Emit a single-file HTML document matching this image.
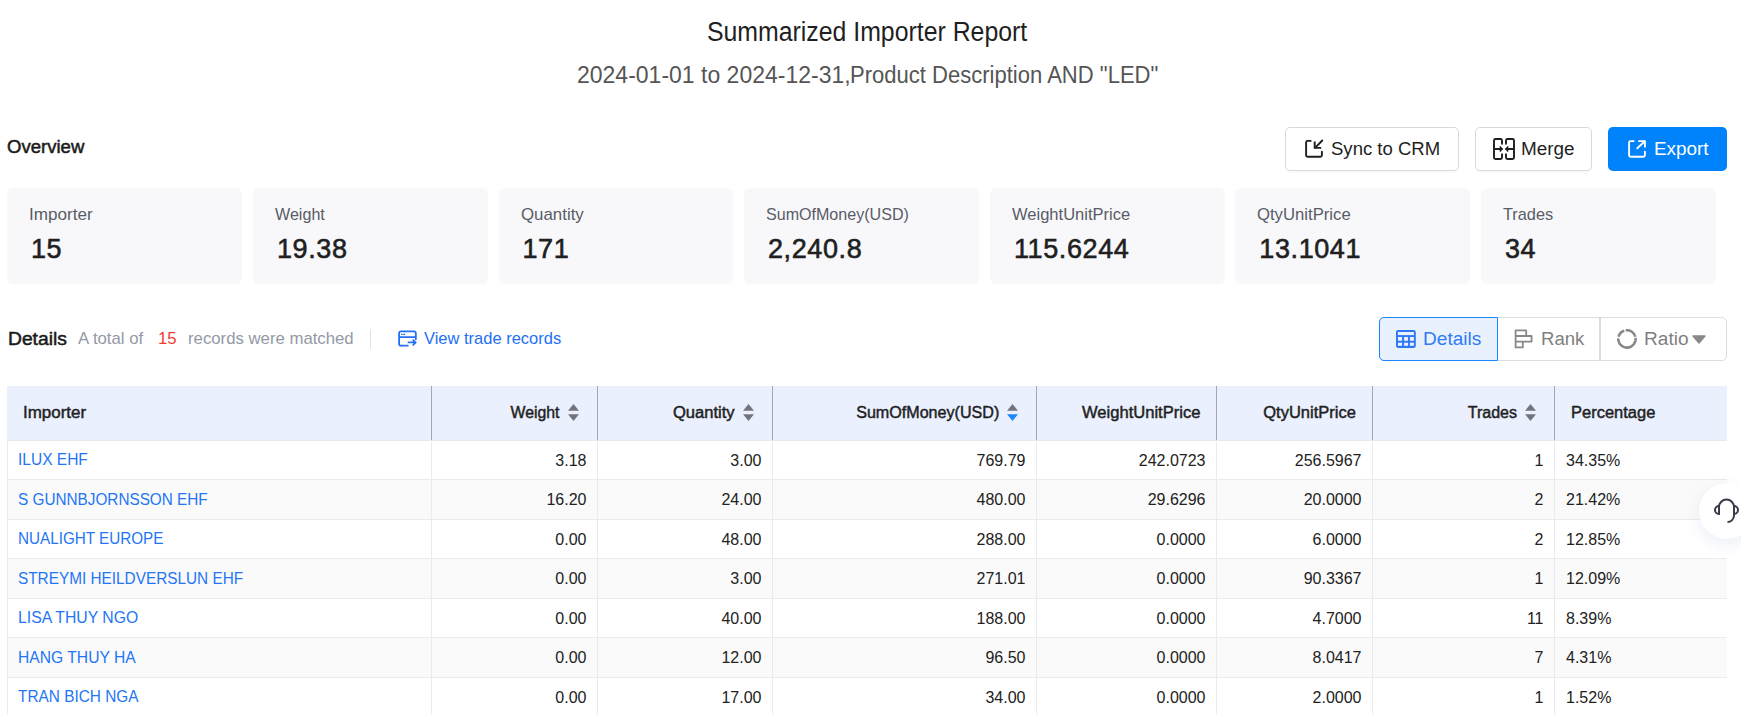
<!DOCTYPE html>
<html><head><meta charset="utf-8"><style>
*{box-sizing:border-box;margin:0;padding:0}
html,body{width:1741px;height:715px;overflow:hidden;background:#fff;font-family:"Liberation Sans",sans-serif;color:#222}
body{position:relative}
.a{position:absolute;white-space:nowrap;line-height:1}
.sx{display:inline-block;transform-origin:0 50%}
.sxr{display:inline-block;transform-origin:100% 50%}
.sxc{display:inline-block;transform-origin:50% 50%}
</style></head><body>
<div class="a" style="left:7px;width:1720px;top:19px;text-align:center;font-size:27px;color:#1f1f1f"><span class="sxc" style="transform:scaleX(0.92)">Summarized Importer Report</span></div>
<div class="a" style="left:577px;top:64px;font-size:23px;color:#555;transform:scaleX(1.0);transform-origin:0 50%">2024-01-01 to 2024-12-31,</div>
<div class="a" style="left:849.5px;top:64px;font-size:23px;color:#555;transform:scaleX(0.958);transform-origin:0 50%">Product Description AND "LED"</div>
<div class="a" style="left:7px;top:138px;font-size:18px;color:#1a1a1a;-webkit-text-stroke:0.5px #1a1a1a;transform:scaleX(1.03);transform-origin:0 50%;">Overview</div>
<div class="a" style="left:1285px;top:127px;width:174px;height:44px;border:1px solid #d9d9dd;border-radius:5px;background:#fff;box-shadow:0 2px 0 rgba(0,0,0,.02);"></div>
<div class="a" style="left:1475px;top:127px;width:117px;height:44px;border:1px solid #d9d9dd;border-radius:5px;background:#fff;box-shadow:0 2px 0 rgba(0,0,0,.02);"></div>
<div class="a" style="left:1608px;top:127px;width:119px;height:44px;border-radius:5px;background:#0082fb"></div>
<svg class="a" style="left:1304px;top:139px" width="21" height="21" viewBox="0 0 21 21"><path d="M6.7 1.9H3.6A1.5 1.5 0 0 0 2.1 3.4V16.2A1.5 1.5 0 0 0 3.6 17.7H16.4A1.5 1.5 0 0 0 17.9 16.2V12.7" fill="none" stroke="#1f1f1f" stroke-width="1.9" stroke-linecap="round"/><path d="M18.3 1.5L11.2 8.6" fill="none" stroke="#1f1f1f" stroke-width="1.9" stroke-linecap="round"/><path d="M10.7 2.6V8.9H17.2" fill="none" stroke="#1f1f1f" stroke-width="1.9"/></svg>
<div class="a" style="left:1331px;top:140px;font-size:18px;color:#1f1f1f;transform:scaleX(1.03);transform-origin:0 50%;">Sync to CRM</div>
<svg class="a" style="left:1492px;top:137px" width="24" height="24" viewBox="0 0 24 24"><g fill="none" stroke="#1f1f1f" stroke-width="1.9" stroke-linecap="round"><path d="M10 6.7V3.5A1.5 1.5 0 0 0 8.5 2H3.5A1.5 1.5 0 0 0 2 3.5V20.5A1.5 1.5 0 0 0 3.5 22H8.5A1.5 1.5 0 0 0 10 20.5V17.2"/><path d="M14 6.7V3.5A1.5 1.5 0 0 1 15.5 2H20.5A1.5 1.5 0 0 1 22 3.5V20.5A1.5 1.5 0 0 1 20.5 22H15.5A1.5 1.5 0 0 1 14 20.5V17.2"/><path d="M2 12H8.5M22 12H15.5"/></g><path d="M8 9.2L11 12L8 14.8Z M16 9.2L13 12L16 14.8Z" fill="#1f1f1f" stroke="#1f1f1f" stroke-width=".6" stroke-linejoin="round"/></svg>
<div class="a" style="left:1521px;top:140px;font-size:18px;color:#1f1f1f;transform:scaleX(1.05);transform-origin:0 50%;">Merge</div>
<svg class="a" style="left:1627px;top:139px" width="21" height="21" viewBox="0 0 21 21"><path d="M6.7 2.1H3.6A1.5 1.5 0 0 0 2.1 3.6V16.2A1.5 1.5 0 0 0 3.6 17.7H16.4A1.5 1.5 0 0 0 17.9 16.2V12.7" fill="none" stroke="#fff" stroke-width="1.9" stroke-linecap="round"/><path d="M10.3 9.3L17.4 2.6" fill="none" stroke="#fff" stroke-width="1.9" stroke-linecap="round"/><path d="M11.2 2.1H17.9V8.5" fill="none" stroke="#fff" stroke-width="1.9"/></svg>
<div class="a" style="left:1654px;top:140px;font-size:18px;color:#fff;transform:scaleX(1.05);transform-origin:0 50%;">Export</div>
<div class="a" style="left:7px;top:188px;width:234.5px;height:96px;background:#f8f8fb;border-radius:6px"></div>
<div class="a" style="left:29px;top:206px;font-size:17px;color:#595c66;transform:scaleX(1.006);transform-origin:0 50%;">Importer</div>
<div class="a" style="left:31px;top:236px;font-size:27px;color:#1f1f1f;transform:scaleX(1.0);transform-origin:0 50%;letter-spacing:0.6px;-webkit-text-stroke:0.6px #1f1f1f">15</div>
<div class="a" style="left:253px;top:188px;width:234.5px;height:96px;background:#f8f8fb;border-radius:6px"></div>
<div class="a" style="left:275px;top:206px;font-size:17px;color:#595c66;transform:scaleX(0.947);transform-origin:0 50%;">Weight</div>
<div class="a" style="left:277px;top:236px;font-size:27px;color:#1f1f1f;transform:scaleX(1.0);transform-origin:0 50%;letter-spacing:0.6px;-webkit-text-stroke:0.6px #1f1f1f">19.38</div>
<div class="a" style="left:498.5px;top:188px;width:234.5px;height:96px;background:#f8f8fb;border-radius:6px"></div>
<div class="a" style="left:520.5px;top:206px;font-size:17px;color:#595c66;transform:scaleX(0.991);transform-origin:0 50%;">Quantity</div>
<div class="a" style="left:522.5px;top:236px;font-size:27px;color:#1f1f1f;transform:scaleX(1.0);transform-origin:0 50%;letter-spacing:0.6px;-webkit-text-stroke:0.6px #1f1f1f">171</div>
<div class="a" style="left:744px;top:188px;width:234.5px;height:96px;background:#f8f8fb;border-radius:6px"></div>
<div class="a" style="left:766px;top:206px;font-size:17px;color:#595c66;transform:scaleX(0.945);transform-origin:0 50%;">SumOfMoney(USD)</div>
<div class="a" style="left:768px;top:236px;font-size:27px;color:#1f1f1f;transform:scaleX(1.0);transform-origin:0 50%;letter-spacing:0.6px;-webkit-text-stroke:0.6px #1f1f1f">2,240.8</div>
<div class="a" style="left:990px;top:188px;width:234.5px;height:96px;background:#f8f8fb;border-radius:6px"></div>
<div class="a" style="left:1012px;top:206px;font-size:17px;color:#595c66;transform:scaleX(0.972);transform-origin:0 50%;">WeightUnitPrice</div>
<div class="a" style="left:1014px;top:236px;font-size:27px;color:#1f1f1f;transform:scaleX(1.0);transform-origin:0 50%;letter-spacing:0.6px;-webkit-text-stroke:0.6px #1f1f1f">115.6244</div>
<div class="a" style="left:1235.3px;top:188px;width:234.5px;height:96px;background:#f8f8fb;border-radius:6px"></div>
<div class="a" style="left:1257.3px;top:206px;font-size:17px;color:#595c66;transform:scaleX(0.982);transform-origin:0 50%;">QtyUnitPrice</div>
<div class="a" style="left:1259.3px;top:236px;font-size:27px;color:#1f1f1f;transform:scaleX(1.0);transform-origin:0 50%;letter-spacing:0.6px;-webkit-text-stroke:0.6px #1f1f1f">13.1041</div>
<div class="a" style="left:1481px;top:188px;width:234.5px;height:96px;background:#f8f8fb;border-radius:6px"></div>
<div class="a" style="left:1503px;top:206px;font-size:17px;color:#595c66;transform:scaleX(0.96);transform-origin:0 50%;">Trades</div>
<div class="a" style="left:1505px;top:236px;font-size:27px;color:#1f1f1f;transform:scaleX(1.0);transform-origin:0 50%;letter-spacing:0.6px;-webkit-text-stroke:0.6px #1f1f1f">34</div>
<div class="a" style="left:8px;top:329.5px;font-size:18px;color:#1a1a1a;-webkit-text-stroke:0.5px #1a1a1a;transform:scaleX(1.07);transform-origin:0 50%;">Details</div>
<div class="a" style="left:78px;top:329.5px;font-size:17px;color:#9499a6;transform:scaleX(0.985);transform-origin:0 50%;">A total of</div>
<div class="a" style="left:158px;top:329.5px;font-size:17px;color:#f13c30;transform:scaleX(0.985);transform-origin:0 50%;">15</div>
<div class="a" style="left:188px;top:329.5px;font-size:17px;color:#9499a6;transform:scaleX(0.985);transform-origin:0 50%;">records were matched</div>
<div class="a" style="left:370px;top:329px;width:1px;height:20px;background:#e1e2e6"></div>
<svg class="a" style="left:398px;top:330px" width="20" height="17" viewBox="0 0 20 17"><g fill="none" stroke="#2370f4" stroke-width="1.8" stroke-linecap="round"><path d="M17.8 9.3V3.2A1.9 1.9 0 0 0 15.9 1.3H3A1.9 1.9 0 0 0 1.1 3.2V13.7A1.9 1.9 0 0 0 3 15.6H9.9"/><path d="M1.5 7.1H17.5"/><path d="M10.5 12.4H17.5M15.2 10.1L17.6 12.4L15.2 14.8"/></g><g fill="#2370f4"><circle cx="3.6" cy="4.4" r=".7"/><circle cx="5" cy="4.4" r=".7"/><circle cx="6.4" cy="4.4" r=".8"/></g></svg>
<div class="a" style="left:424px;top:329.5px;font-size:17px;color:#2370f4;transform:scaleX(0.97);transform-origin:0 50%;">View trade records</div>
<div class="a" style="left:1379px;top:317px;width:348px;height:44px;border:1px solid #dcdde2;border-radius:5px;background:#fff"></div>
<div class="a" style="left:1379px;top:317px;width:119px;height:44px;border:1px solid #1a86ff;border-radius:5px 0 0 5px;background:#eaf1fe"></div>
<div class="a" style="left:1599px;top:318px;width:2px;height:42px;background:#dcdde2"></div>
<svg class="a" style="left:1396px;top:330px" width="20" height="18" viewBox="0 0 20 18"><rect x="0" y="0" width="19.8" height="18" rx="2.2" fill="#2c78f6"/><g fill="#eaf1fe"><rect x="1.9" y="2" width="16" height="3.1"/><rect x="1.9" y="7" width="4.2" height="3.8"/><rect x="8.1" y="7" width="3.9" height="3.8"/><rect x="13.9" y="7" width="4" height="3.8"/><rect x="1.9" y="12.7" width="4.2" height="3.1"/><rect x="8.1" y="12.7" width="3.9" height="3.1"/><rect x="13.9" y="12.7" width="4" height="3.1"/></g></svg>
<div class="a" style="left:1423px;top:329.5px;font-size:18px;color:#2f7bf5;transform:scaleX(1.06);transform-origin:0 50%;">Details</div>
<svg class="a" style="left:1514px;top:329px" width="20" height="20" viewBox="0 0 20 20"><path d="M1.6 1.4H12.2V7H17.6V12.6H8.8V18.4H1.6Z M1.6 7H12.2 M1.6 12.6H8.8" fill="none" stroke="#888" stroke-width="1.8" stroke-linejoin="round"/></svg>
<div class="a" style="left:1541px;top:329.5px;font-size:18px;color:#7f7f7f;transform:scaleX(1.03);transform-origin:0 50%;">Rank</div>
<svg class="a" style="left:1617px;top:329px" width="20" height="20" viewBox="0 0 20 20"><circle cx="9.95" cy="9.95" r="8.7" fill="none" stroke="#888" stroke-width="2.6" stroke-dasharray="28.85 1.52 8.65 1.52 12.6 1.52" transform="rotate(-7 9.95 9.95)"/></svg>
<div class="a" style="left:1644px;top:329.5px;font-size:18px;color:#7f7f7f;transform:scaleX(1.06);transform-origin:0 50%;">Ratio</div>
<svg class="a" style="left:1692px;top:334.5px" width="14" height="9" viewBox="0 0 14 9"><path d="M1 1h12L7 8z" fill="#888" stroke="#888" stroke-width="1.4" stroke-linejoin="round"/></svg>
<div class="a" style="left:7px;top:386px;width:1720px;height:54px;background:#eaf0fd"></div>
<div class="a" style="left:7px;top:440.0px;width:1720px;height:39.5px;background:#fff"></div>
<div class="a" style="left:7px;top:479.5px;width:1720px;height:39.5px;background:#fafafa"></div>
<div class="a" style="left:7px;top:479.0px;width:1720px;height:1px;background:#ebebee"></div>
<div class="a" style="left:7px;top:519.0px;width:1720px;height:39.5px;background:#fff"></div>
<div class="a" style="left:7px;top:518.5px;width:1720px;height:1px;background:#ebebee"></div>
<div class="a" style="left:7px;top:558.5px;width:1720px;height:39.5px;background:#fafafa"></div>
<div class="a" style="left:7px;top:558.0px;width:1720px;height:1px;background:#ebebee"></div>
<div class="a" style="left:7px;top:598.0px;width:1720px;height:39.5px;background:#fff"></div>
<div class="a" style="left:7px;top:597.5px;width:1720px;height:1px;background:#ebebee"></div>
<div class="a" style="left:7px;top:637.5px;width:1720px;height:39.5px;background:#fafafa"></div>
<div class="a" style="left:7px;top:637.0px;width:1720px;height:1px;background:#ebebee"></div>
<div class="a" style="left:7px;top:677.0px;width:1720px;height:39.5px;background:#fff"></div>
<div class="a" style="left:7px;top:676.5px;width:1720px;height:1px;background:#ebebee"></div>
<div class="a" style="left:7px;top:439.5px;width:1720px;height:1px;background:#e9e9eb"></div>
<div class="a" style="left:7px;top:440px;width:1px;height:275px;background:#ebebee"></div>
<div class="a" style="left:431px;top:386px;width:1px;height:54px;background:#a3a7b3"></div>
<div class="a" style="left:431px;top:440px;width:1px;height:275px;background:#ebebee"></div>
<div class="a" style="left:597px;top:386px;width:1px;height:54px;background:#a3a7b3"></div>
<div class="a" style="left:597px;top:440px;width:1px;height:275px;background:#ebebee"></div>
<div class="a" style="left:772px;top:386px;width:1px;height:54px;background:#a3a7b3"></div>
<div class="a" style="left:772px;top:440px;width:1px;height:275px;background:#ebebee"></div>
<div class="a" style="left:1036px;top:386px;width:1px;height:54px;background:#a3a7b3"></div>
<div class="a" style="left:1036px;top:440px;width:1px;height:275px;background:#ebebee"></div>
<div class="a" style="left:1216px;top:386px;width:1px;height:54px;background:#a3a7b3"></div>
<div class="a" style="left:1216px;top:440px;width:1px;height:275px;background:#ebebee"></div>
<div class="a" style="left:1372px;top:386px;width:1px;height:54px;background:#a3a7b3"></div>
<div class="a" style="left:1372px;top:440px;width:1px;height:275px;background:#ebebee"></div>
<div class="a" style="left:1554px;top:386px;width:1px;height:54px;background:#a3a7b3"></div>
<div class="a" style="left:1554px;top:440px;width:1px;height:275px;background:#ebebee"></div>
<div class="a" style="left:23px;top:405px;font-size:16px;-webkit-text-stroke:0.45px #1f1f1f;color:#1f1f1f;transform:scaleX(1.06);transform-origin:0 50%">Importer</div>
<svg class="a" style="left:568px;top:404px" width="11" height="17" viewBox="0 0 11 17"><path d="M5.5 0L11 6.8H0z" fill="#74747c"/><path d="M5.5 17L11 10.2H0z" fill="#74747c"/></svg>
<div class="a" style="right:1181px;top:405px;font-size:16px;-webkit-text-stroke:0.45px #1f1f1f;color:#1f1f1f;transform:scaleX(0.99);transform-origin:100% 50%">Weight</div>
<svg class="a" style="left:743px;top:404px" width="11" height="17" viewBox="0 0 11 17"><path d="M5.5 0L11 6.8H0z" fill="#74747c"/><path d="M5.5 17L11 10.2H0z" fill="#74747c"/></svg>
<div class="a" style="right:1006px;top:405px;font-size:16px;-webkit-text-stroke:0.45px #1f1f1f;color:#1f1f1f;transform:scaleX(1.035);transform-origin:100% 50%">Quantity</div>
<svg class="a" style="left:1007px;top:404px" width="11" height="17" viewBox="0 0 11 17"><path d="M5.5 0L11 6.8H0z" fill="#74747c"/><path d="M5.5 17L11 10.2H0z" fill="#1a86ff"/></svg>
<div class="a" style="right:742px;top:405px;font-size:16px;-webkit-text-stroke:0.45px #1f1f1f;color:#1f1f1f;transform:scaleX(1.006);transform-origin:100% 50%">SumOfMoney(USD)</div>
<div class="a" style="right:541px;top:405px;font-size:16px;-webkit-text-stroke:0.45px #1f1f1f;color:#1f1f1f;transform:scaleX(1.035);transform-origin:100% 50%">WeightUnitPrice</div>
<div class="a" style="right:385px;top:405px;font-size:16px;-webkit-text-stroke:0.45px #1f1f1f;color:#1f1f1f;transform:scaleX(1.03);transform-origin:100% 50%">QtyUnitPrice</div>
<svg class="a" style="left:1525px;top:404px" width="11" height="17" viewBox="0 0 11 17"><path d="M5.5 0L11 6.8H0z" fill="#74747c"/><path d="M5.5 17L11 10.2H0z" fill="#74747c"/></svg>
<div class="a" style="right:224px;top:405px;font-size:16px;-webkit-text-stroke:0.45px #1f1f1f;color:#1f1f1f;transform:scaleX(1.0);transform-origin:100% 50%">Trades</div>
<div class="a" style="left:1571px;top:405px;font-size:16px;-webkit-text-stroke:0.45px #1f1f1f;color:#1f1f1f;transform:scaleX(1.03);transform-origin:0 50%">Percentage</div>
<div class="a" style="left:18px;top:452.0px;font-size:16px;color:#2375f6;transform:scaleX(0.97);transform-origin:0 50%">ILUX EHF</div>
<div class="a" style="right:1154.5px;top:452.6px;font-size:16px;color:#222;transform:scaleX(1.0);transform-origin:100% 50%">3.18</div>
<div class="a" style="right:979.5px;top:452.6px;font-size:16px;color:#222;transform:scaleX(1.0);transform-origin:100% 50%">3.00</div>
<div class="a" style="right:715.5px;top:452.6px;font-size:16px;color:#222;transform:scaleX(1.0);transform-origin:100% 50%">769.79</div>
<div class="a" style="right:535.5px;top:452.6px;font-size:16px;color:#222;transform:scaleX(1.0);transform-origin:100% 50%">242.0723</div>
<div class="a" style="right:379.5px;top:452.6px;font-size:16px;color:#222;transform:scaleX(1.0);transform-origin:100% 50%">256.5967</div>
<div class="a" style="right:197.5px;top:452.6px;font-size:16px;color:#222;transform:scaleX(1.0);transform-origin:100% 50%">1</div>
<div class="a" style="left:1566px;top:452.6px;font-size:16px;color:#222;transform:scaleX(1.0);transform-origin:0 50%">34.35%</div>
<div class="a" style="left:18px;top:491.5px;font-size:16px;color:#2375f6;transform:scaleX(0.957);transform-origin:0 50%">S GUNNBJORNSSON EHF</div>
<div class="a" style="right:1154.5px;top:492.1px;font-size:16px;color:#222;transform:scaleX(1.0);transform-origin:100% 50%">16.20</div>
<div class="a" style="right:979.5px;top:492.1px;font-size:16px;color:#222;transform:scaleX(1.0);transform-origin:100% 50%">24.00</div>
<div class="a" style="right:715.5px;top:492.1px;font-size:16px;color:#222;transform:scaleX(1.0);transform-origin:100% 50%">480.00</div>
<div class="a" style="right:535.5px;top:492.1px;font-size:16px;color:#222;transform:scaleX(1.0);transform-origin:100% 50%">29.6296</div>
<div class="a" style="right:379.5px;top:492.1px;font-size:16px;color:#222;transform:scaleX(1.0);transform-origin:100% 50%">20.0000</div>
<div class="a" style="right:197.5px;top:492.1px;font-size:16px;color:#222;transform:scaleX(1.0);transform-origin:100% 50%">2</div>
<div class="a" style="left:1566px;top:492.1px;font-size:16px;color:#222;transform:scaleX(1.0);transform-origin:0 50%">21.42%</div>
<div class="a" style="left:18px;top:531.0px;font-size:16px;color:#2375f6;transform:scaleX(0.953);transform-origin:0 50%">NUALIGHT EUROPE</div>
<div class="a" style="right:1154.5px;top:531.6px;font-size:16px;color:#222;transform:scaleX(1.0);transform-origin:100% 50%">0.00</div>
<div class="a" style="right:979.5px;top:531.6px;font-size:16px;color:#222;transform:scaleX(1.0);transform-origin:100% 50%">48.00</div>
<div class="a" style="right:715.5px;top:531.6px;font-size:16px;color:#222;transform:scaleX(1.0);transform-origin:100% 50%">288.00</div>
<div class="a" style="right:535.5px;top:531.6px;font-size:16px;color:#222;transform:scaleX(1.0);transform-origin:100% 50%">0.0000</div>
<div class="a" style="right:379.5px;top:531.6px;font-size:16px;color:#222;transform:scaleX(1.0);transform-origin:100% 50%">6.0000</div>
<div class="a" style="right:197.5px;top:531.6px;font-size:16px;color:#222;transform:scaleX(1.0);transform-origin:100% 50%">2</div>
<div class="a" style="left:1566px;top:531.6px;font-size:16px;color:#222;transform:scaleX(1.0);transform-origin:0 50%">12.85%</div>
<div class="a" style="left:18px;top:570.5px;font-size:16px;color:#2375f6;transform:scaleX(0.959);transform-origin:0 50%">STREYMI HEILDVERSLUN EHF</div>
<div class="a" style="right:1154.5px;top:571.1px;font-size:16px;color:#222;transform:scaleX(1.0);transform-origin:100% 50%">0.00</div>
<div class="a" style="right:979.5px;top:571.1px;font-size:16px;color:#222;transform:scaleX(1.0);transform-origin:100% 50%">3.00</div>
<div class="a" style="right:715.5px;top:571.1px;font-size:16px;color:#222;transform:scaleX(1.0);transform-origin:100% 50%">271.01</div>
<div class="a" style="right:535.5px;top:571.1px;font-size:16px;color:#222;transform:scaleX(1.0);transform-origin:100% 50%">0.0000</div>
<div class="a" style="right:379.5px;top:571.1px;font-size:16px;color:#222;transform:scaleX(1.0);transform-origin:100% 50%">90.3367</div>
<div class="a" style="right:197.5px;top:571.1px;font-size:16px;color:#222;transform:scaleX(1.0);transform-origin:100% 50%">1</div>
<div class="a" style="left:1566px;top:571.1px;font-size:16px;color:#222;transform:scaleX(1.0);transform-origin:0 50%">12.09%</div>
<div class="a" style="left:18px;top:610.0px;font-size:16px;color:#2375f6;transform:scaleX(0.984);transform-origin:0 50%">LISA THUY NGO</div>
<div class="a" style="right:1154.5px;top:610.6px;font-size:16px;color:#222;transform:scaleX(1.0);transform-origin:100% 50%">0.00</div>
<div class="a" style="right:979.5px;top:610.6px;font-size:16px;color:#222;transform:scaleX(1.0);transform-origin:100% 50%">40.00</div>
<div class="a" style="right:715.5px;top:610.6px;font-size:16px;color:#222;transform:scaleX(1.0);transform-origin:100% 50%">188.00</div>
<div class="a" style="right:535.5px;top:610.6px;font-size:16px;color:#222;transform:scaleX(1.0);transform-origin:100% 50%">0.0000</div>
<div class="a" style="right:379.5px;top:610.6px;font-size:16px;color:#222;transform:scaleX(1.0);transform-origin:100% 50%">4.7000</div>
<div class="a" style="right:197.5px;top:610.6px;font-size:16px;color:#222;transform:scaleX(1.0);transform-origin:100% 50%">11</div>
<div class="a" style="left:1566px;top:610.6px;font-size:16px;color:#222;transform:scaleX(1.0);transform-origin:0 50%">8.39%</div>
<div class="a" style="left:18px;top:649.5px;font-size:16px;color:#2375f6;transform:scaleX(0.978);transform-origin:0 50%">HANG THUY HA</div>
<div class="a" style="right:1154.5px;top:650.1px;font-size:16px;color:#222;transform:scaleX(1.0);transform-origin:100% 50%">0.00</div>
<div class="a" style="right:979.5px;top:650.1px;font-size:16px;color:#222;transform:scaleX(1.0);transform-origin:100% 50%">12.00</div>
<div class="a" style="right:715.5px;top:650.1px;font-size:16px;color:#222;transform:scaleX(1.0);transform-origin:100% 50%">96.50</div>
<div class="a" style="right:535.5px;top:650.1px;font-size:16px;color:#222;transform:scaleX(1.0);transform-origin:100% 50%">0.0000</div>
<div class="a" style="right:379.5px;top:650.1px;font-size:16px;color:#222;transform:scaleX(1.0);transform-origin:100% 50%">8.0417</div>
<div class="a" style="right:197.5px;top:650.1px;font-size:16px;color:#222;transform:scaleX(1.0);transform-origin:100% 50%">7</div>
<div class="a" style="left:1566px;top:650.1px;font-size:16px;color:#222;transform:scaleX(1.0);transform-origin:0 50%">4.31%</div>
<div class="a" style="left:18px;top:689.0px;font-size:16px;color:#2375f6;transform:scaleX(0.961);transform-origin:0 50%">TRAN BICH NGA</div>
<div class="a" style="right:1154.5px;top:689.6px;font-size:16px;color:#222;transform:scaleX(1.0);transform-origin:100% 50%">0.00</div>
<div class="a" style="right:979.5px;top:689.6px;font-size:16px;color:#222;transform:scaleX(1.0);transform-origin:100% 50%">17.00</div>
<div class="a" style="right:715.5px;top:689.6px;font-size:16px;color:#222;transform:scaleX(1.0);transform-origin:100% 50%">34.00</div>
<div class="a" style="right:535.5px;top:689.6px;font-size:16px;color:#222;transform:scaleX(1.0);transform-origin:100% 50%">0.0000</div>
<div class="a" style="right:379.5px;top:689.6px;font-size:16px;color:#222;transform:scaleX(1.0);transform-origin:100% 50%">2.0000</div>
<div class="a" style="right:197.5px;top:689.6px;font-size:16px;color:#222;transform:scaleX(1.0);transform-origin:100% 50%">1</div>
<div class="a" style="left:1566px;top:689.6px;font-size:16px;color:#222;transform:scaleX(1.0);transform-origin:0 50%">1.52%</div>
<div class="a" style="left:1699px;top:482.5px;width:56px;height:56px;border-radius:50%;background:#fff;box-shadow:0 6px 16px rgba(80,100,200,.10)"></div>
<svg class="a" style="left:1712px;top:496px" width="28" height="27" viewBox="0 0 28 27"><g fill="none" stroke="#3a3a4a" stroke-width="2"><path d="M7 18V11a7.5 7.5 0 0 1 15 0v8.5a6.5 6.5 0 0 1-6.5 6.5"/><path d="M7 10a4 4 0 0 0 0 8zM22 10a4 4 0 0 1 0 8z"/></g></svg>
</body></html>
